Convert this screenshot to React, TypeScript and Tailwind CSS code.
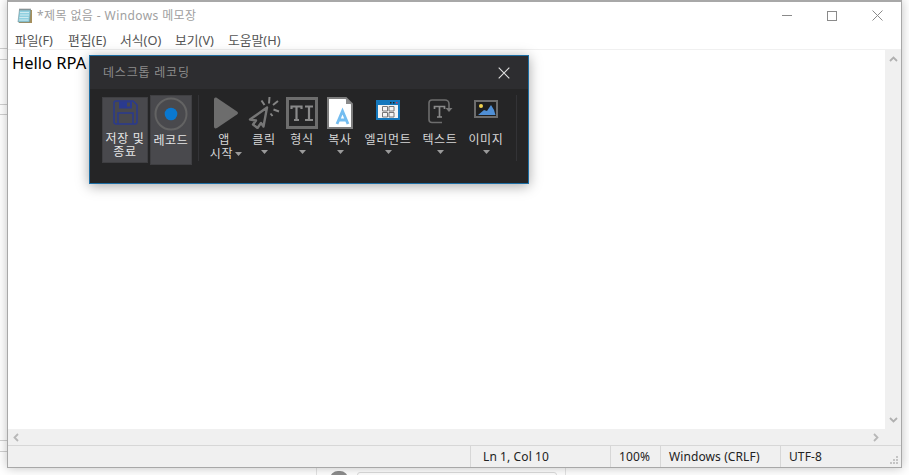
import type { ReactNode } from 'react'

const sans = { fontFamily: '"Noto Sans", "Noto Sans CJK KR", sans-serif' }

function Caret() {
  return (
    <svg width="7" height="4" viewBox="0 0 7 4" className="shrink-0">
      <path d="M0 0h7L3.5 4z" fill="#9a9a9a" />
    </svg>
  )
}

function NotepadIcon() {
  return (
    <svg width="16" height="17" viewBox="0 0 16 17" className="mr-[4px] shrink-0">
      <path d="M3 3h12v13H2z" fill="#a58f5c" />
      <path d="M2.5 2.500h11L12.500 15H1z" fill="#8fd0e0" stroke="#6f8f96" strokeWidth=".6" />
      <path d="M3 5.500h9M3 8h9M2.500 10.500h9M2.300 13h9" stroke="#cdeaf0" />
      <path d="M3 1.500v2M5 1.500v2M7 1.500v2M9 1.500v2M11 1.500v2M13 1.500v2" stroke="#777" />
    </svg>
  )
}

function Tool({ label, width, icon }: { label: string; width: string; icon: ReactNode }) {
  return (
    <div className={`flex flex-col items-center ${width}`}>
      <div className="flex h-[36px] w-full items-center justify-center">{icon}</div>
      <div className="mt-[2px] text-[12px] leading-[13px] tracking-[0.7px] whitespace-nowrap text-[#d6d6d6]">{label}</div>
      <div className="-mt-[1px] flex h-[13px] items-center">
        <Caret />
      </div>
    </div>
  )
}

function RecorderPanel() {
  return (
    <div
      className="absolute left-[89px] top-[55px] w-[440px] border border-[#1c6ea4] bg-[#252526] shadow-[0_2px_12px_rgba(0,0,0,0.35)]"
      style={sans}
    >
      <div className="flex h-[33px] items-center justify-between bg-[#2d2d30] pl-[13px] pr-[18px]">
        <span className="text-[12px] tracking-[0.8px] text-[#8c8c8c]">데스크톱 레코딩</span>
        <svg width="12" height="12" viewBox="0 0 12 12">
          <path d="M.7.7l10.600 10.600M11.300.7L.7 11.300" stroke="#e0e0e0" strokeWidth="1.100" />
        </svg>
      </div>
      <div className="flex h-[94px] items-start pl-[12px] pt-[6px]">
        <div className="mt-[2px] flex h-[66px] w-[46px] flex-col items-center border border-[#3f3f42] bg-[#49494d]">
          <svg width="25" height="25" viewBox="0 0 25 25" className="mt-[2px]">
            <path d="M1 3a2 2 0 0 1 2-2h17l4 4v17a2 2 0 0 1-2 2H3a2 2 0 0 1-2-2z" fill="none" stroke="#2a3a8f" strokeWidth="1.500" />
            <path d="M6 1.500h13v7H6z" fill="#2a3a8f" />
            <path d="M14 2.500h3v4h-3z" fill="#49494d" />
            <path d="M5 23.500V13h15v10.500" fill="none" stroke="#2a3a8f" strokeWidth="1.500" />
          </svg>
          <div className="mt-[7px] text-center text-[12px] leading-[13px] tracking-[0.7px] whitespace-nowrap text-[#e6e6e6]">
            저장 및
            <br />
            종료
          </div>
        </div>
        <div className="ml-[2px] flex h-[70px] w-[42px] flex-col items-center border border-[#3f3f42] bg-[#49494d]">
          <svg width="34" height="34" viewBox="0 0 34 34" className="mt-[1px]">
            <circle cx="17" cy="17" r="15.500" fill="none" stroke="#636363" strokeWidth="2" />
            <circle cx="17" cy="17" r="6.300" fill="#0a78d0" />
          </svg>
          <div className="mt-[3px] text-[12px] leading-[13px] tracking-[0.7px] whitespace-nowrap text-[#e6e6e6]">레코드</div>
        </div>
        <div className="ml-[6px] h-[66px] w-px bg-[#333336]" />
        <div className="ml-[8px] flex w-[38px] flex-col items-center text-[12px] leading-[13px] tracking-[0.7px] text-[#d6d6d6]">
          <div className="flex h-[36px] w-full items-center justify-center">
            <svg width="26" height="32" viewBox="0 0 26 32">
              <path d="M1 2.500C1 .6 2.500 0 4 1l20 13.500c1.300.9 1.300 2.100 0 3L4 31c-1.500 1-3 .4-3-1.500z" fill="#6d6d6d" />
            </svg>
          </div>
          <div className="mt-[2px] pr-[4px]">앱</div>
          <div className="mt-[1px] flex items-center gap-[2px] whitespace-nowrap">
            시작
            <Caret />
          </div>
        </div>
        <Tool
          label="클릭"
          width="w-[38px]"
          icon={
            <svg width="32" height="32" viewBox="0 0 32 32" fill="none">
              <path d="M19 10.500L2 22.500l6 1L5 27.500l4.500 3.500 3.500-5 2.500 3.500z" stroke="#767676" strokeWidth="2.400" strokeLinejoin="round" />
              <path d="M21.500 0l-.5 6.500M13.500 3.500l3 4.500M30 4l-5 4M31 14.500l-5.500-2M24.500 19l-2-2.500" stroke="#858585" strokeWidth="2" />
            </svg>
          }
        />
        <Tool
          label="형식"
          width="w-[38px]"
          icon={
            <div className="flex h-[32px] w-[32px] items-center justify-center border-[3px] border-[#6d6d6d]">
              <svg width="24" height="16" viewBox="0 0 24 16" fill="none" stroke="#8a8a8a" strokeWidth="2.200">
                <path d="M1.500 4V1.500h10V4M6.500 1.500V15M4 15h5M15 1.500h8M19 1.500V15M15 15h8" />
              </svg>
            </div>
          }
        />
        <Tool
          label="복사"
          width="w-[38px]"
          icon={
            <svg width="26" height="32" viewBox="0 0 26 32">
              <path d="M1 1h18l6 6v24H1z" fill="#fff" stroke="#7d7d7d" strokeWidth="2" />
              <path d="M19 1v6h6z" fill="#8a8a8a" />
              <path d="M10 27l5.500-13L21 27M12 23h7" fill="none" stroke="#74bdf0" strokeWidth="2.800" />
            </svg>
          }
        />
        <Tool
          label="엘리먼트"
          width="ml-[3px] w-[52px]"
          icon={
            <svg width="24" height="20" viewBox="0 0 24 20" className="mt-[-7px]">
              <path d="M0 0h24v20H0z" fill="#1478bd" />
              <path d="M2 5h20v13H2z" fill="#f4f4f4" />
              <path d="M14 2h1.500v1.500H14zM17 2h1.500v1.500H17z" fill="#222" />
              <path d="M20 2h1.500v1.500H20z" fill="#d8385a" />
              <path d="M6.500 6.500h5v4.500h-5zM13 6.500h5v4.500h-5zM6.500 12.500h5V17h-5zM13 12.500h5V17h-5z" fill="none" stroke="#777" />
            </svg>
          }
        />
        <Tool
          label="텍스트"
          width="w-[52px]"
          icon={
            <svg width="25" height="25" viewBox="0 0 25 25" fill="none" className="mt-[-3px]">
              <path d="M14 23.500H4a3 3 0 0 1-3-3V4a3 3 0 0 1 3-3h13a4 4 0 0 1 4 4v5" stroke="#6d6d6d" strokeWidth="1.600" />
              <path d="M17.500 9l3.500 4 3.500-4z" fill="#777" />
              <path d="M6.500 10V7.500h10V10M11.500 7.500V18M9 18h5" stroke="#8a8a8a" strokeWidth="1.700" />
            </svg>
          }
        />
        <Tool
          label="이미지"
          width="w-[40px]"
          icon={
            <svg width="24" height="18" viewBox="0 0 24 18" className="mt-[-9px]">
              <path d="M1 1h22v16H1z" fill="#1f1f1f" stroke="#6d6d6d" strokeWidth="2" />
              <circle cx="7" cy="6" r="2" fill="#f2d34f" />
              <path d="M4 15l6-5 3 1 4-6 3 5 1.500 5z" fill="#4f8fd6" />
            </svg>
          }
        />
        <div className="ml-[10px] h-[66px] w-px bg-[#333336]" />
      </div>
    </div>
  )
}

function StatusCell({ width, children }: { width: string; children?: ReactNode }) {
  return <div className={`flex h-full items-center border-l border-[#d7d7d7] ${width}`}>{children}</div>
}

export default function App() {
  const menus: [string, string][] = [
    ['파일(F)', 'w-[53px]'],
    ['편집(E)', 'w-[52px]'],
    ['서식(O)', 'w-[55px]'],
    ['보기(V)', 'w-[53px]'],
    ['도움말(H)', 'w-[60px]'],
  ]

  return (
    <div className="relative h-[475px] w-[909px] overflow-hidden bg-white" style={sans}>
      {/* what peeks out behind the notepad window */}
      <div className="absolute left-0 top-[48px] h-[12px] w-[8px] border-y border-[#d0d0d0]" />
      <div className="absolute left-0 top-[104px] h-[11px] w-[8px] border-y border-[#d0d0d0]" />
      <div className="absolute left-0 top-[440px] h-[12px] w-[8px] border-y border-[#d0d0d0]" />
      <div className="absolute left-[316px] top-[467px] h-[8px] w-[250px] border-x border-[#e4e4e4]" />
      <div className="absolute left-[330px] top-[471px] h-[16px] w-[18px] rounded-full bg-[#8c8c8c]" />
      <div className="absolute left-[357px] top-[472px] h-[10px] w-[200px] rounded-[3px] border border-[#dcdcdc]" />

      <div className="relative ml-[7px] flex h-[468px] w-[895px] flex-col border border-t-2 border-[#a8a8a8] bg-white shadow-[0_0_10px_rgba(0,0,0,0.25)]">
        <div className="flex h-[29px] shrink-0 items-center pb-[2px] pl-[9px]">
          <NotepadIcon />
          <span className="text-[12px] tracking-[0.4px] text-[#a0a0a0]">*제목 없음 - Windows 메모장</span>
          <div className="ml-auto flex items-center pr-[18px]">
            <div className="h-px w-[10px] bg-[#8a8a8a]" />
            <div className="ml-[35px] h-[10px] w-[10px] border border-[#8a8a8a]" />
            <svg width="11" height="11" viewBox="0 0 11 11" className="ml-[35px]">
              <path d="M.5.5l10 10M10.500.5l-10 10" stroke="#8a8a8a" />
            </svg>
          </div>
        </div>

        <div className="flex h-[19px] shrink-0 items-center border-b border-[#f0f0f0] pl-[7px] pt-[1px]">
          {menus.map(([name, width]) => (
            <span key={name} className={`text-[12.8px] whitespace-nowrap text-[#555] ${width}`}>
              {name}
            </span>
          ))}
        </div>

        <div className="flex min-h-0 flex-1">
          <div className="flex-1 pl-[4px] text-[16.5px] leading-[25px] text-black">Hello RPA</div>
          <div className="flex w-[16px] flex-col items-center justify-between bg-[#f0f0f0] py-[6px]">
            <svg width="9" height="6" viewBox="0 0 9 6" fill="none">
              <path d="M1 5l3.500-3.500L8 5" stroke="#b0b0b0" strokeWidth="1.800" />
            </svg>
            <svg width="9" height="6" viewBox="0 0 9 6" fill="none">
              <path d="M1 1l3.500 3.500L8 1" stroke="#b0b0b0" strokeWidth="1.800" />
            </svg>
          </div>
        </div>

        <div className="flex h-[16px] shrink-0 items-center justify-between bg-[#f0f0f0] pl-[5px] pr-[22px]">
          <svg width="6" height="9" viewBox="0 0 6 9" fill="none">
            <path d="M5 1L1.500 4.500 5 8" stroke="#b8b8b8" strokeWidth="1.800" />
          </svg>
          <svg width="6" height="9" viewBox="0 0 6 9" fill="none">
            <path d="M1 1l3.500 3.500L1 8" stroke="#b8b8b8" strokeWidth="1.800" />
          </svg>
        </div>

        <div className="relative flex h-[22px] shrink-0 items-center border-t border-[#d7d7d7] bg-[#f0f0f0] text-[12px] tracking-[0.1px] text-[#222]">
          <div className="w-[462px]" />
          <StatusCell width="w-[140px] pl-[12px]">Ln 1, Col 10</StatusCell>
          <StatusCell width="w-[50px] pl-[8px]">100%</StatusCell>
          <StatusCell width="w-[120px] pl-[8px]">Windows (CRLF)</StatusCell>
          <StatusCell width="w-[121px] pl-[8px]">UTF-8</StatusCell>
          <svg width="10" height="10" viewBox="0 0 10 10" className="absolute bottom-[2px] right-[2px]">
            <path d="M7 1h2v2H7zM4 4h2v2H4zM7 4h2v2H7zM1 7h2v2H1zM4 7h2v2H4zM7 7h2v2H7z" fill="#c4c4c4" />
          </svg>
        </div>
      </div>

      <RecorderPanel />
    </div>
  )
}
